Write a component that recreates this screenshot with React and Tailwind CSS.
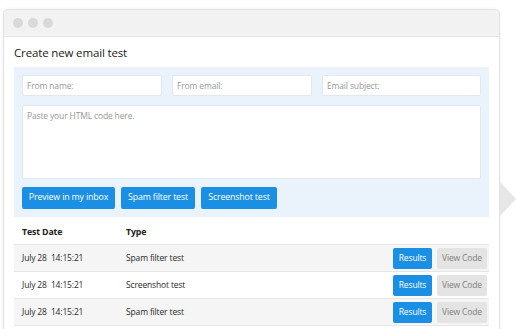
import React from 'react'

const rows = [
  { date: 'July 28  14:15:21', type: 'Spam filter test', shade: true },
  { date: 'July 28  14:15:21', type: 'Screenshot test', shade: false },
  { date: 'July 28  14:15:21', type: 'Spam filter test', shade: true }
]

const inputCls =
  'h-[21px] rounded-[2px] border border-[#e1e8f0] bg-white px-[4px] text-[8.5px] tracking-[-0.15px] text-[#333] placeholder:text-[#999] outline-none'

export default function App() {
  return (
    <div
      className="relative h-[329px] w-[516px] overflow-hidden bg-white"
      style={{ fontFamily: '"Open Sans", "Liberation Sans", sans-serif' }}
    >
      <div className="ml-[3px] mt-[9px] h-[340px] w-[497px] rounded-t-[5px] border border-[#e2e2e2] bg-white shadow-[0_0_4px_rgba(0,0,0,0.06)]">
        {/* title bar */}
        <div className="flex h-[27px] items-center gap-[5px] rounded-t-[5px] border-b border-[#e6e6e6] bg-[#f2f2f2] pl-[9px]">
          <span className="h-[10px] w-[10px] rounded-full bg-[#d9d9d9]" />
          <span className="h-[10px] w-[10px] rounded-full bg-[#d9d9d9]" />
          <span className="h-[10px] w-[10px] rounded-full bg-[#d9d9d9]" />
        </div>

        <div className="pl-[10px] pt-[8px]">
          <h1 className="mb-[6px] text-[11.5px] font-medium leading-[16px] tracking-[-0.15px] text-[#1a1a1a]">
            Create new email test
          </h1>

          <div className="w-[475px] bg-[#eaf2fb] p-[8px]">
            <div className="flex gap-[10px]">
              <input className={`${inputCls} w-[140px]`} placeholder="From name:" />
              <input className={`${inputCls} w-[140px]`} placeholder="From email:" />
              <input className={`${inputCls} flex-1`} placeholder="Email subject:" />
            </div>
            <textarea
              className="mt-[9px] block h-[74px] w-full resize-none rounded-[2px] border border-[#e1e8f0] bg-white px-[4px] py-[4px] text-[8.5px] tracking-[-0.15px] text-[#333] placeholder:text-[#999] outline-none"
              placeholder="Paste your HTML code here."
            />
            <div className="mt-[8px] flex gap-[6px]">
              {[
                ['Preview in my inbox', 'w-[93px]'],
                ['Spam filter test', 'w-[74px]'],
                ['Screenshot test', 'w-[76px]']
              ].map(([label, w]) => (
                <button
                  key={label}
                  type="button"
                  className={`h-[22px] ${w} rounded-[2px] bg-[#1a8fe3] text-[8.8px] tracking-[-0.15px] text-white`}
                >
                  {label}
                </button>
              ))}
            </div>
          </div>

          <div className="w-[475px] tracking-[-0.15px]">
            <div className="flex h-[27px] items-end pb-[5px] pl-[8px] text-[8.8px] font-bold text-[#222]">
              <span className="w-[104px]">Test Date</span>
              <span>Type</span>
            </div>
            {rows.map((r, i) => (
              <div
                key={i}
                className={`flex h-[27px] items-center border-t border-[#e6e6e6] pl-[8px] pr-[2px] text-[8.5px] text-[#2a2a2a] ${
                  r.shade ? 'bg-[#f5f5f5]' : 'bg-white'
                }`}
              >
                <span className="w-[104px] whitespace-pre">{r.date}</span>
                <span className="flex-1">{r.type}</span>
                <button type="button" className="h-[21px] w-[39px] rounded-[2px] bg-[#1a8fe3] text-[8.5px] text-white">
                  Results
                </button>
                <button
                  type="button"
                  className="ml-[5px] h-[21px] w-[50px] rounded-[2px] bg-[#e4e4e4] text-[8.5px] text-[#808080]"
                >
                  View Code
                </button>
              </div>
            ))}
            <div className="border-t border-[#e6e6e6]" />
          </div>
        </div>
      </div>

      {/* carousel arrow */}
      <svg className="absolute left-[500px] top-[182px]" width="16" height="34" viewBox="0 0 16 34">
        <polygon points="0,0 16,17 0,34" fill="#e6e6e6" />
      </svg>
    </div>
  )
}
